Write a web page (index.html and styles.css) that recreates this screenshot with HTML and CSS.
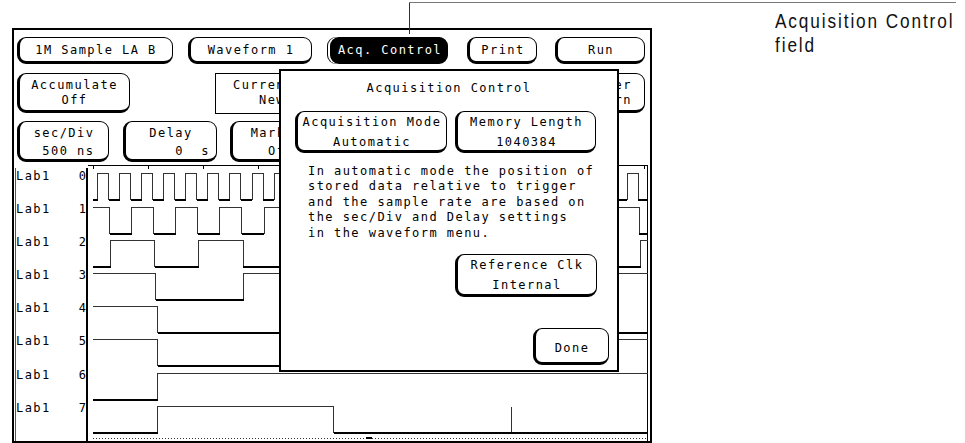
FILE: index.html
```html
<!DOCTYPE html>
<html lang="en">
<head>
<meta charset="utf-8">
<title>Acquisition Control</title>
<link rel="stylesheet" href="styles.css">
</head>
<body>
<div class="page">
  <div class="screen">
    <div class="row row1">
      <div class="btn w-sample"><div>1M Sample LA B</div></div>
      <div class="btn w-wave"><div>Waveform 1</div></div>
      <div class="btn btn-active w-acq"><div>Acq. Control</div></div>
      <div class="btn w-print"><div>Print</div></div>
      <div class="btn w-run"><div>Run</div></div>
    </div>
    <div class="row row2">
      <div class="btn w-accum"><div>Accumulate</div><div>Off</div></div>
      <div class="field w-current"><div>Current Sample</div><div>   New Value</div></div>
      <div class="btn w-trig"><div>Trigger</div><div>Pattern</div></div>
    </div>
    <div class="row row3">
      <div class="btn w-secdiv"><div>sec/Div</div><div> 500 ns</div></div>
      <div class="btn w-delay"><div>Delay</div><div>     0  s</div></div>
      <div class="btn w-mark"><div>Markers</div><div>Off</div></div>
    </div>
    <div class="wave-area">
      <div class="labels">
        <div class="lab"><span>Lab1</span><span class="bit">0</span></div>
        <div class="lab"><span>Lab1</span><span class="bit">1</span></div>
        <div class="lab"><span>Lab1</span><span class="bit">2</span></div>
        <div class="lab"><span>Lab1</span><span class="bit">3</span></div>
        <div class="lab"><span>Lab1</span><span class="bit">4</span></div>
        <div class="lab"><span>Lab1</span><span class="bit">5</span></div>
        <div class="lab"><span>Lab1</span><span class="bit">6</span></div>
        <div class="lab"><span>Lab1</span><span class="bit">7</span></div>
      </div>
      <svg class="waves" width="560" height="276" viewBox="88 165 560 276" xmlns="http://www.w3.org/2000/svg">
        <g class="frame-lines">
          <path d="M88,165.5H648 M647.5,165V441"/>
          <path d="M93.5,165V169 M148.5,165V169 M203.5,165V169 M258.5,165V169 M313.5,165V169 M369.5,165V169 M424.5,165V169 M479.5,165V169 M534.5,165V169 M589.5,165V169 M644.5,165V169"/>
          <path class="dots" d="M93,438.5H646"/>
          <path class="mark" d="M366,437.5h6"/>
        </g>
        <g class="trace">
          <path d="M93,199.5H97.5v-26h11v26h11.08v-26h11v26h11.08v-26h11v26h11.08v-26h11v26h11.08v-26h11v26h11.08v-26h11v26h11.08v-26h11v26h11.08v-26h11v26h11.08v-26h11v26h11.08v-26h11v26h11.08v-26h11v26h11.08v-26h11v26h11.08v-26h11v26h11.08v-26h11v26h11.08v-26h11v26h11.08v-26h11v26h11.08v-26h11v26h11.08v-26h11v26h11.08v-26h11v26h11.08v-26h11v26h11.08v-26h11v26h11.08v-26h11v26h11.08v-26h11v26h11.08v-26h11v26h11.08v-26h11v26h11.08"/>
          <path d="M93,207.5H109.5v26h22.08v-26h22.08v26h22.08v-26h22.08v26h22.08v-26h22.08v26h22.08v-26h22.08v26h22.08v-26h22.08v26h22.08v-26h22.08v26h22.08v-26h22.08v26h22.08v-26h22.08v26h22.08v-26h22.08v26h22.08v-26h22.08v26h22.08v-26h22.08v26h22.08v-26h22.08v26h22.08v-26h22.08"/>
          <path d="M93,266.5H110.5v-26h44.17v26h44.17v-26h44.17v26h44.17v-26h44.17v26h44.17v-26h44.17v26h44.17v-26h44.17v26h44.17v-26h44.17v26h44.17v-26h44.17v26h44.17"/>
          <path d="M93,273.5H155.5v26h88.33v-26h88.33v26h88.33v-26h88.33v26h88.33v-26h88.33"/>
          <path d="M93,306.5H157.5v26H333.7v-26H510.3v26H648"/>
          <path d="M93,339.5H157.5v26H509.5v-26H648"/>
          <path d="M93,399.5H157.5v-26H648"/>
          <path d="M93,432.5H157.5v-26H333.5v26H648 M511.5,406.5V432.5"/>
        </g>
        <g class="low">
          <path d="M93,200H97.5"/>
          <line x1="108.5" y1="200" x2="648" y2="200" stroke-dasharray="11.08 11"/>
          <line x1="109.5" y1="234" x2="648" y2="234" stroke-dasharray="22.08 22.08"/>
          <path d="M93,267H110.5"/>
          <line x1="154.67" y1="267" x2="648" y2="267" stroke-dasharray="44.17 44.17"/>
          <line x1="155.5" y1="300" x2="648" y2="300" stroke-dasharray="88.33 88.33"/>
          <path d="M157.5,333H333.7 M510.3,333H648"/>
          <path d="M157.5,366H509.5"/>
          <path d="M93,400H157.5"/>
          <path d="M93,433H157.5 M333.5,433H648"/>
        </g>
      </svg>
    </div>

    <div class="dialog">
      <div class="dlg-title">Acquisition Control</div>
      <div class="dlg-row">
        <div class="btn dbtn w-mode"><div>Acquisition Mode</div><div>Automatic</div></div>
        <div class="btn dbtn w-mem"><div>Memory Length</div><div>1040384</div></div>
      </div>
      <div class="dlg-text">In automatic mode the position of
stored data relative to trigger
and the sample rate are based on
the sec/Div and Delay settings
in the waveform menu.</div>
      <div class="btn dbtn w-ref"><div>Reference Clk</div><div>Internal</div></div>
      <div class="btn w-done"><div>Done</div></div>
    </div>
  </div>

  <div class="note"><span class="note-text">Acquisition Control<br>field</span></div>
  <div class="callout-v"></div>
  <div class="callout-h"></div>
</div>
</body>
</html>
```

FILE: styles.css
```css
html, body {
  margin: 0;
  padding: 0;
  background: #fff;
}

.page {
  position: relative;
  display: flex;
  align-items: flex-start;
  width: 965px;
  height: 443px;
  overflow: hidden;
  background: #fff;
  color: #000;
}

/* ---------- instrument screen ---------- */
.screen {
  position: relative;
  box-sizing: border-box;
  flex: none;
  margin: 28px 0 0 12px;
  width: 640px;
  height: 415px;
  border: 2px solid #000;
  display: flex;
  flex-direction: column;
  font-family: "DejaVu Sans Mono", monospace;
  font-size: 12px;
  line-height: 16px;
  letter-spacing: 1.45px;
}

.row {
  display: flex;
  align-items: flex-start;
  padding-left: 3px;
}
.row1 { margin-top: 7px; height: 27px; }
.row2 { margin-top: 9px; height: 40px; }
.row3 { margin-top: 8px; height: 41px; }

.btn {
  box-sizing: border-box;
  flex: none;
  display: flex;
  flex-direction: column;
  align-items: center;
  border: 1px solid #000;
  border-left-width: 3px;
  border-bottom-width: 3px;
  border-radius: 9px;
  background: #fff;
  white-space: pre;
}

.row1 .btn { height: 27px; padding-top: 4px; }
.row2 .btn { height: 40px; padding-top: 4px; line-height: 15px; }
.row3 .btn { height: 41px; padding-top: 3px; line-height: 17.5px; }

.btn-active {
  background: #000;
  color: #fff;
  box-shadow: -2px 0 0 #fff, -3px 0 0 #000;
}

.w-sample { width: 156px; }
.w-wave   { width: 124px; margin-left: 15px; }
.w-acq    { width: 118px; margin-left: 18px; }
.w-print  { width: 70px;  margin-left: 19px; }
.w-run    { width: 90px;  margin-left: 18px; }

.w-accum  { width: 113px; }
.w-current { width: 158px; margin-left: 85px; }
.w-trig   { width: 89px;  margin-left: 183px; }

.w-secdiv { width: 92px; }
.w-delay  { width: 94px; margin-left: 14px; }
.w-mark   { width: 100px; margin-left: 13px; }

.field {
  box-sizing: border-box;
  flex: none;
  height: 41px;
  border: 1px solid #000;
  padding: 4px 0 0 17px;
  line-height: 15px;
  white-space: pre;
}

/* ---------- waveform area ---------- */
.wave-area {
  display: flex;
  align-items: flex-start;
  margin-top: 3px;
  height: 276px;
}

.labels {
  box-sizing: border-box;
  flex: none;
  margin: 3px 0 0 1px;
  width: 73px;
  height: 273px;
  border-left: 1px solid #555;
  border-right: 2px solid #000;
  display: grid;
  grid-auto-rows: 33.1px;
  align-content: start;
}

.lab {
  display: flex;
  justify-content: space-between;
  align-items: flex-start;
}
.bit { letter-spacing: 0; }

.waves {
  display: block;
  flex: none;
}
.waves path, .waves line {
  fill: none;
  shape-rendering: crispEdges;
}
.frame-lines path { stroke: #000; stroke-width: 1; }
.frame-lines .dots { stroke: #333; stroke-dasharray: 1 2; }
.frame-lines .mark { stroke-width: 2; }
.trace path { stroke: #333; stroke-width: 1; }
.low path, .low line { stroke: #000; stroke-width: 2; }

/* ---------- dialog overlay ---------- */
.dialog {
  position: absolute;
  left: 265px;
  top: 39px;
  box-sizing: border-box;
  width: 340px;
  height: 303px;
  border: 2px solid #000;
  background: #fff;
  display: flex;
  flex-direction: column;
}

.dlg-title {
  margin-top: 9px;
  text-align: center;
}

.dlg-row {
  display: flex;
  gap: 8px;
  margin: 15px 0 0 14px;
}

.dbtn { height: 42px; line-height: 20px; }
.w-mode { width: 152px; }
.w-mem  { width: 141px; }

.dlg-text {
  margin: 11px 0 0 27px;
  line-height: 15.4px;
  white-space: pre;
}

.w-ref {
  align-self: flex-end;
  width: 142px;
  height: 43px;
  margin: 13px 20px 0 0;
  padding-top: 1px;
  line-height: 19.5px;
}

.w-done {
  align-self: flex-end;
  width: 76px;
  height: 37px;
  margin: 31px 8px 0 0;
  padding-top: 4px;
  justify-content: center;
}

/* ---------- annotation ---------- */
.note {
  flex: none;
  margin: 9px 0 0 123px;
  width: 185px;
  font-family: "Liberation Sans", Arial, sans-serif;
  font-size: 21px;
  line-height: 24px;
  white-space: nowrap;
  color: #111;
}
.note-text {
  display: inline-block;
  letter-spacing: 2.3px;
  transform: scaleX(0.82);
  transform-origin: 0 0;
}

.callout-v {
  position: absolute;
  left: 409px;
  top: 2px;
  width: 1px;
  height: 32px;
  background: #333;
}
.callout-h {
  position: absolute;
  left: 409px;
  top: 2px;
  width: 547px;
  height: 1px;
  background: #777;
}
```
